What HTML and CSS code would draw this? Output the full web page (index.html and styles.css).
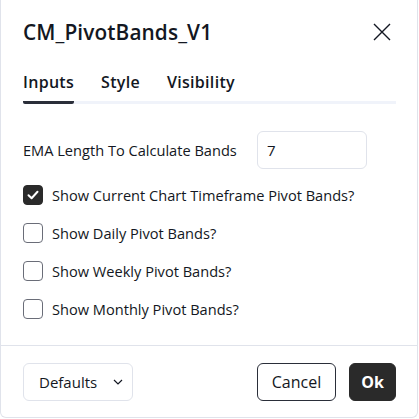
FILE: index.html
```html
<!DOCTYPE html>
<html lang="en">
<head>
<meta charset="utf-8">
<title>CM_PivotBands_V1</title>
<link rel="stylesheet" href="styles.css">
</head>
<body>
<div class="dialog">
  <div class="header">
    <div class="title">CM_PivotBands_V1</div>
    <button class="close" aria-label="Close">
      <svg width="18" height="18" viewBox="0 0 18 18"><path d="M1 1L17 17M17 1L1 17" stroke="#131722" stroke-width="1.4" fill="none"/></svg>
    </button>
  </div>
  <div class="tabs">
    <div class="tab active">Inputs</div>
    <div class="tab">Style</div>
    <div class="tab">Visibility</div>
  </div>
  <div class="content">
    <div class="field">
      <span class="label">EMA Length To Calculate Bands</span>
      <div class="input">7</div>
    </div>
    <label class="check-row">
      <span class="box checked">
        <svg width="12" height="10" viewBox="0 0 12 10"><path d="M1.5 5.2L4.6 8.2L10.5 1.8" stroke="#fff" stroke-width="2" fill="none" stroke-linecap="round" stroke-linejoin="round"/></svg>
      </span>
      <span class="check-text">Show Current Chart Timeframe Pivot Bands?</span>
    </label>
    <label class="check-row">
      <span class="box"></span>
      <span class="check-text">Show Daily Pivot Bands?</span>
    </label>
    <label class="check-row">
      <span class="box"></span>
      <span class="check-text">Show Weekly Pivot Bands?</span>
    </label>
    <label class="check-row">
      <span class="box"></span>
      <span class="check-text">Show Monthly Pivot Bands?</span>
    </label>
  </div>
  <div class="footer">
    <button class="defaults">
      <span>Defaults</span>
      <svg width="10" height="6" viewBox="0 0 10 6"><path d="M1 1L5 5L9 1" stroke="#131722" stroke-width="1.2" fill="none"/></svg>
    </button>
    <div class="actions">
      <button class="btn cancel">Cancel</button>
      <button class="btn ok">Ok</button>
    </div>
  </div>
</div>
</body>
</html>
```
FILE: styles.css
```css
* { box-sizing: border-box; }
html, body { margin: 0; padding: 0; }
body {
  background: #ffffff;
  font-family: "Open Sans", "Noto Sans", sans-serif;
  color: #131722;
  width: 419px;
  height: 419px;
  overflow: hidden;
}
.dialog {
  width: 418px;
  height: 418px;
  background: #fff;
  border: 1px solid #e0e3eb;
  border-top: none;
  border-radius: 0 0 6px 6px;
  display: flex;
  flex-direction: column;
}
.header {
  height: 64px;
  display: flex;
  align-items: center;
  justify-content: space-between;
  padding: 0 26px 0 22px;
}
.title {
  font-size: 20.8px;
  font-weight: 600;
  letter-spacing: 0.1px;
}
.close {
  border: none;
  background: none;
  padding: 0;
  width: 18px;
  height: 18px;
  display: flex;
}
.tabs {
  display: flex;
  gap: 27px;
  margin: 0 21px 0 22px;
  border-bottom: 3px solid #f0f3fa;
}
.tab {
  font-size: 16px;
  font-weight: 600;
  line-height: 24px;
  letter-spacing: 0.3px;
  padding: 6px 0 7px;
  margin-bottom: -3px;
  border-bottom: 3px solid transparent;
}
.tab.active {
  border-bottom-color: #2a2e39;
  border-radius: 0 0 2px 2px;
}
.content {
  padding: 27px 22px 17px 22px;
  display: flex;
  flex-direction: column;
}
.field {
  display: grid;
  grid-template-columns: 234px 110px;
  align-items: center;
  height: 38px;
  margin-bottom: 7px;
  font-size: 14.6px;
}
.input {
  height: 38px;
  border: 1px solid #e0e3eb;
  border-radius: 6px;
  padding: 0 9px;
  display: flex;
  align-items: center;
  font-size: 15px;
}
.check-row {
  height: 38px;
  display: flex;
  align-items: center;
  gap: 9px;
  font-size: 14.6px;
}
.box {
  width: 20px;
  height: 20px;
  border: 1px solid #6a6d78;
  border-radius: 4px;
  display: flex;
  align-items: center;
  justify-content: center;
  flex: none;
}
.box.checked {
  background: #2a2a2a;
  border-color: #2a2a2a;
}
.footer {
  border-top: 1px solid #e0e3eb;
  padding: 17px 21px 15px 22px;
  display: flex;
  justify-content: space-between;
  align-items: center;
}
button {
  font-family: inherit;
  color: #131722;
  cursor: pointer;
}
.defaults {
  width: 110px;
  height: 38px;
  border: 1px solid #e0e3eb;
  border-radius: 6px;
  background: #fff;
  display: flex;
  align-items: center;
  justify-content: space-between;
  padding: 0 9px 0 15px;
  font-size: 15px;
}
.actions {
  display: flex;
  gap: 13px;
}
.btn {
  height: 38px;
  border-radius: 6px;
  font-size: 16px;
  padding: 0;
}
.cancel {
  width: 79px;
  background: #fff;
  border: 1px solid #2a2e39;
  font-weight: 500;
}
.ok {
  width: 47px;
  background: #2a2a2a;
  border: 1px solid #2a2a2a;
  color: #fff;
  font-weight: 700;
}
```
